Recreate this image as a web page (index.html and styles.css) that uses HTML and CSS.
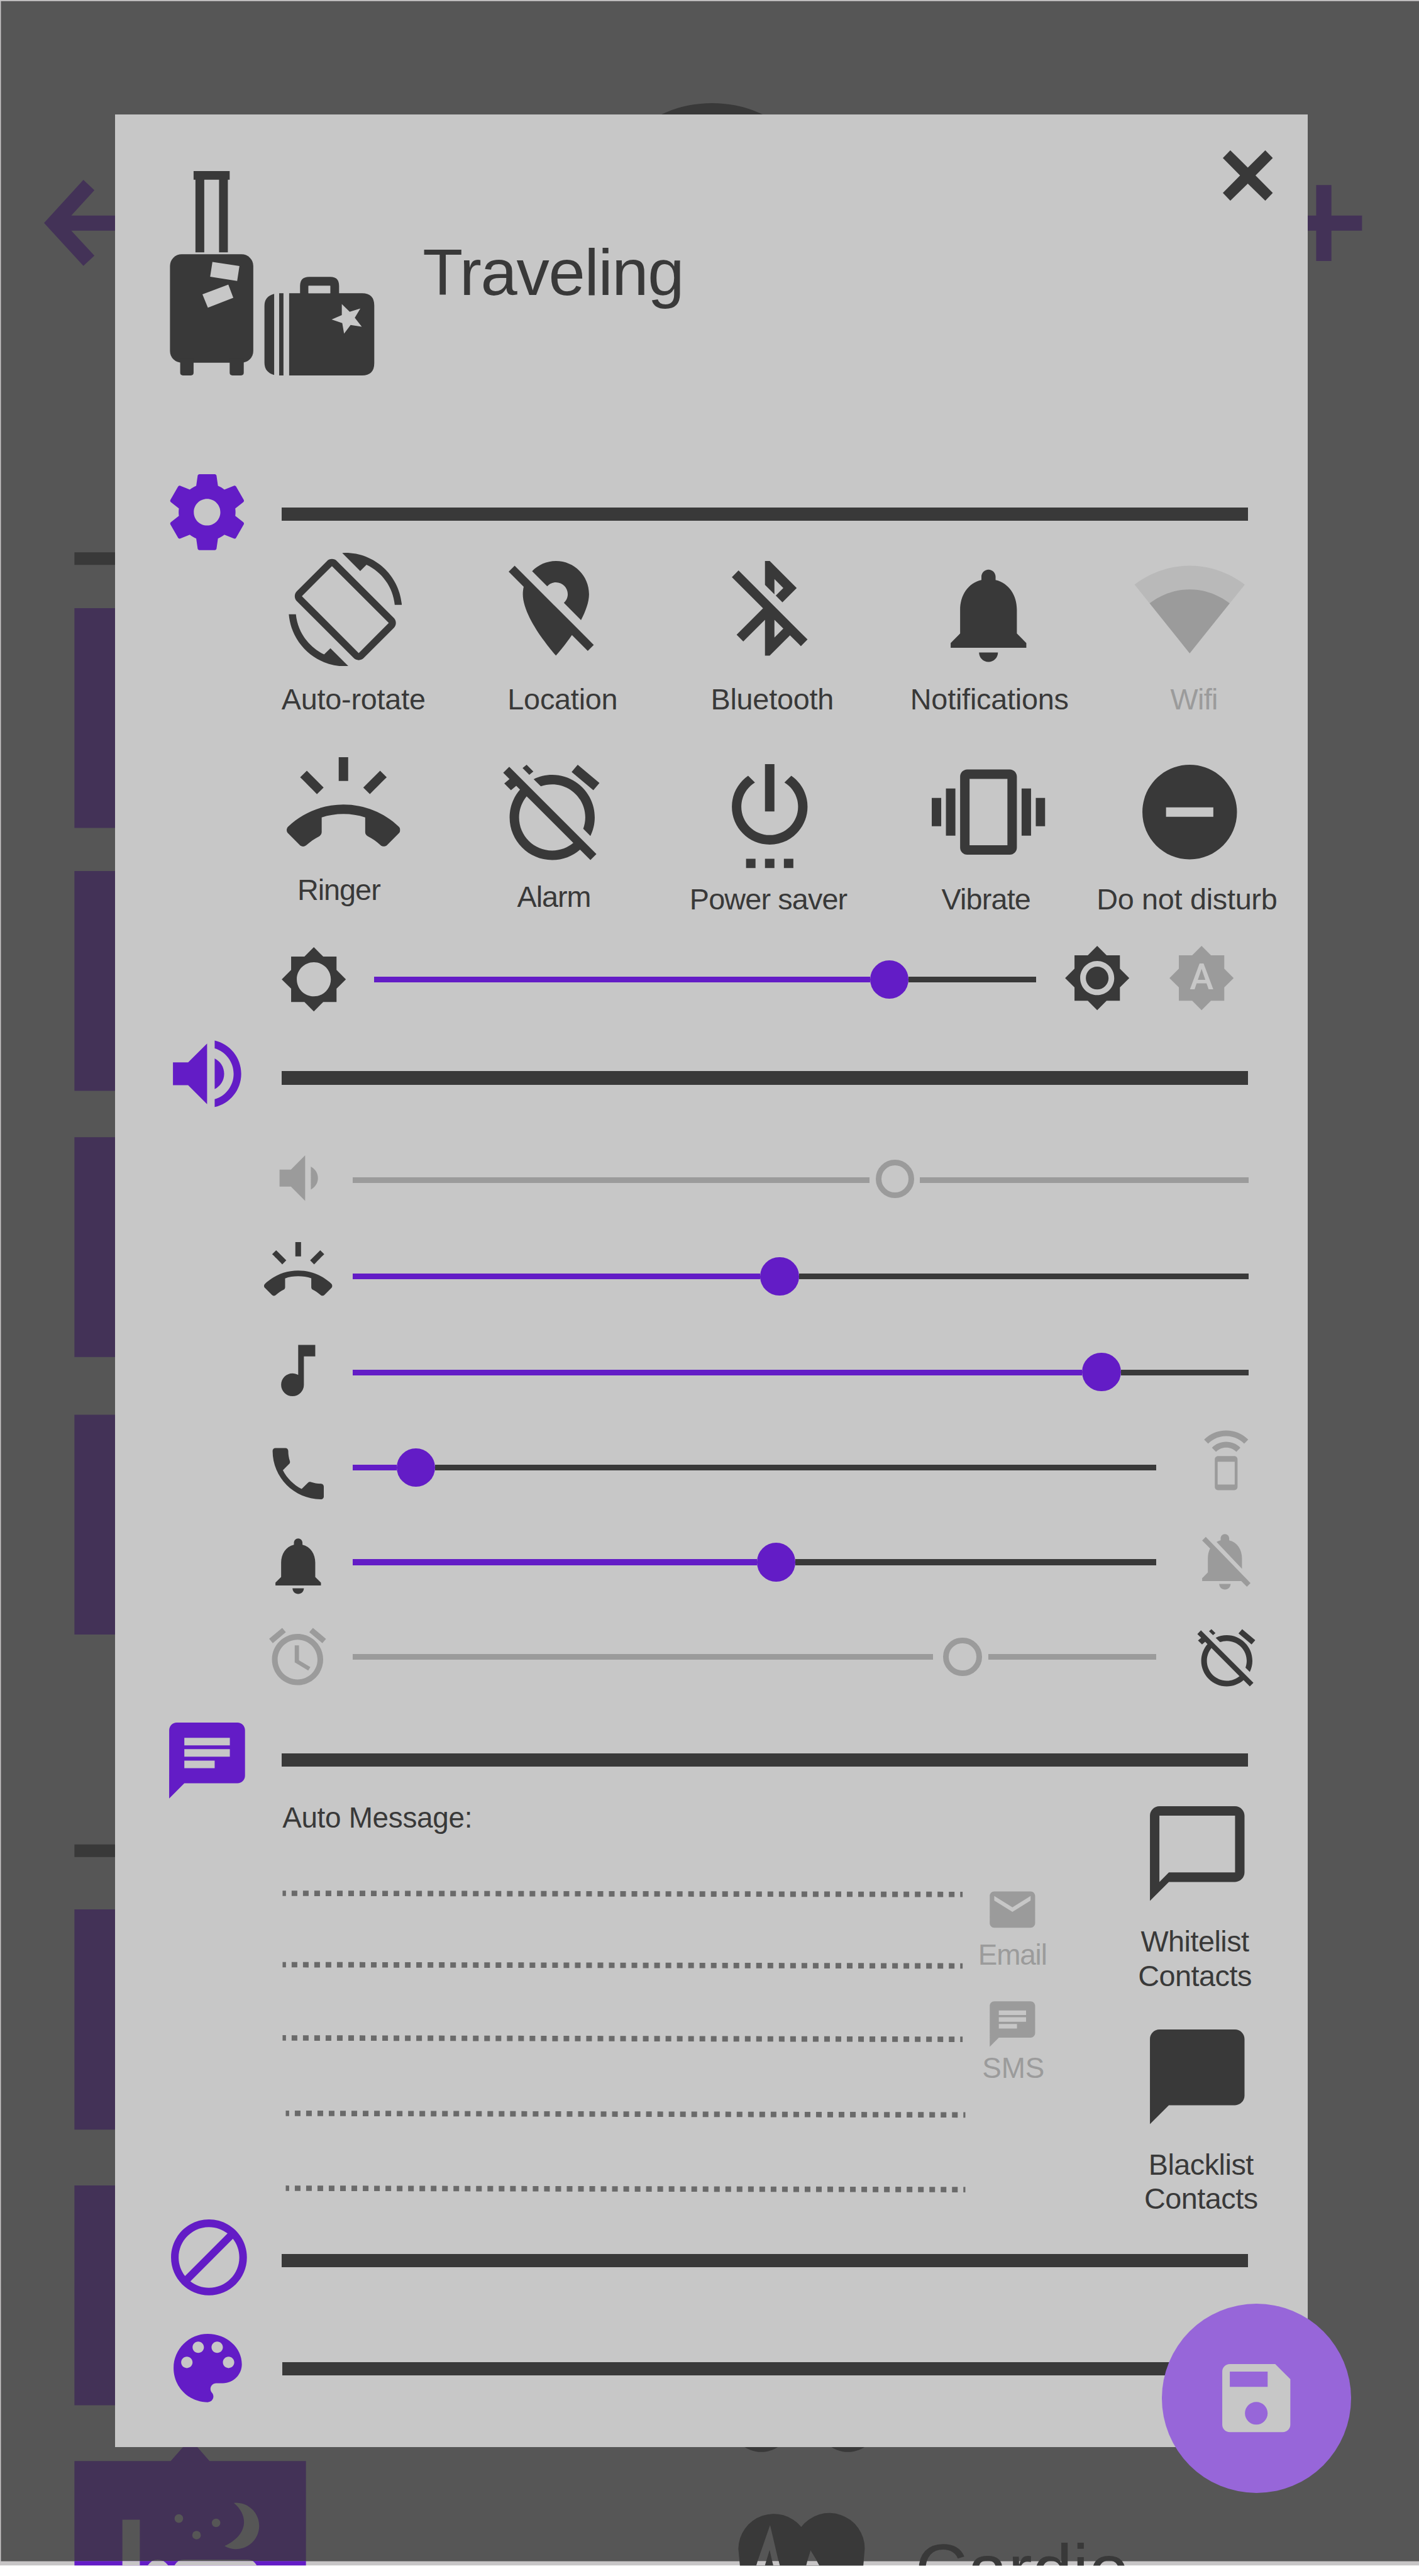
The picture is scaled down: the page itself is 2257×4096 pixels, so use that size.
FILE: index.html
```html
<!DOCTYPE html>
<html lang="en">
<head>
<meta charset="utf-8">
<title>Traveling</title>
<link rel="stylesheet" href="styles.css">
</head>
<body>
<svg class="sprite" aria-hidden="true">
  <symbol id="settings" viewBox="0 0 24 24"><path d="M19.43 12.98c.04-.32.07-.64.07-.98s-.03-.66-.07-.98l2.11-1.65c.19-.15.24-.42.12-.64l-2-3.46c-.12-.22-.39-.3-.61-.22l-2.49 1c-.52-.4-1.08-.73-1.69-.98l-.38-2.65C14.46 2.18 14.25 2 14 2h-4c-.25 0-.46.18-.49.42l-.38 2.65c-.61.25-1.17.59-1.69.98l-2.49-1c-.23-.09-.49 0-.61.22l-2 3.46c-.13.22-.07.49.12.64l2.11 1.65c-.04.32-.07.65-.07.98s.03.66.07.98l-2.11 1.65c-.19.15-.24.42-.12.64l2 3.46c.12.22.39.3.61.22l2.49-1c.52.4 1.08.73 1.69.98l.38 2.65c.03.24.24.42.49.42h4c.25 0 .46-.18.49-.42l.38-2.65c.61-.25 1.17-.59 1.69-.98l2.49 1c.23.09.49 0 .61-.22l2-3.46c.12-.22.07-.49-.12-.64l-2.11-1.65zM12 15.5c-1.93 0-3.5-1.57-3.5-3.5s1.57-3.5 3.5-3.5 3.5 1.57 3.5 3.5-1.57 3.5-3.5 3.5z"/></symbol>
  <symbol id="rotate" viewBox="0 0 24 24"><path d="M16.48 2.52c3.27 1.55 5.61 4.72 5.97 8.48h1.5C23.44 4.84 18.29 0 12 0l-.66.03 3.81 3.81 1.33-1.32zm-6.25-.77c-.59-.59-1.54-.59-2.12 0L1.75 8.11c-.59.59-.59 1.54 0 2.12l12.02 12.02c.59.59 1.54.59 2.12 0l6.36-6.36c.59-.59.59-1.54 0-2.12L10.23 1.75zm4.6 19.44L2.81 9.17l6.36-6.36 12.02 12.02-6.36 6.36zm-7.31.29C4.25 19.94 1.91 16.76 1.55 13H.05C.56 19.16 5.71 24 12 24l.66-.03-3.81-3.81-1.33 1.32z"/></symbol>
  <symbol id="location-off" viewBox="0 0 24 24"><path d="M12 6.5c1.38 0 2.5 1.12 2.5 2.5 0 .74-.33 1.39-.83 1.85l3.63 3.63c.98-1.86 1.7-3.8 1.7-5.48 0-3.87-3.13-7-7-7-1.98 0-3.76.83-5.04 2.15l3.19 3.19c.46-.52 1.11-.84 1.85-.84zm4.37 9.6l-4.63-4.63-.11-.11L3.27 3 2 4.27l3.18 3.18C5.07 7.95 5 8.47 5 9c0 5.25 7 13 7 13s1.67-1.85 3.38-4.35L18.73 21 20 19.73l-3.63-3.63z"/></symbol>
  <symbol id="bluetooth-off" viewBox="0 0 24 24"><path d="M13 5.83l1.88 1.88-1.6 1.6 1.41 1.41 3.02-3.02L12 2h-1v5.03l2 2v-3.2zM5.41 4L4 5.41 10.59 12 5 17.59 6.41 19 11 14.41V22h1l4.29-4.29 2.3 2.29L20 18.59 5.41 4zM13 18.17v-3.76l1.88 1.88L13 18.17z"/></symbol>
  <symbol id="bell" viewBox="0 0 24 24"><path d="M12 22c1.1 0 2-.9 2-2h-4c0 1.1.89 2 2 2zm6-6v-5c0-3.07-1.64-5.64-4.5-6.32V4c0-.83-.67-1.5-1.5-1.5s-1.5.67-1.5 1.5v.68C7.63 5.36 6 7.92 6 11v5l-2 2v1h16v-1l-2-2z"/></symbol>
  <symbol id="bell-off" viewBox="0 0 24 24"><path d="M20 18.69L7.84 6.14 5.27 3.49 4 4.76l2.8 2.8v.01c-.52.99-.8 2.16-.8 3.42v5l-2 2v1h13.73l2 2L21 19.72l-1-1.03zM12 22c1.11 0 2-.89 2-2h-4c0 1.11.89 2 2 2zm6-7.32V11c0-3.08-1.64-5.64-4.5-6.32V4c0-.83-.67-1.5-1.5-1.5s-1.5.67-1.5 1.5v.68c-.15.03-.29.08-.42.12-.1.03-.2.07-.3.11h-.01c-.01 0-.01 0-.02.01-.23.09-.46.2-.68.31 0 0-.01 0-.01.01L18 14.68z"/></symbol>
  <symbol id="wifi" viewBox="0 0 24 24"><path class="wifi-outer" d="M12.01 21.49L23.64 7c-.45-.34-4.93-4-11.64-4C5.28 3 .81 6.66.36 7l11.63 14.49.01.01.01-.01z"/><path d="M3.53 10.95l8.46 10.54.01.01.01-.01 8.46-10.54C20.04 10.62 16.81 8 12 8c-4.81 0-8.04 2.62-8.47 2.95z"/></symbol>
  <symbol id="ringer" viewBox="0 0 24 24"><path d="M23.71 16.67C20.66 13.78 16.54 12 12 12 7.46 12 3.34 13.78.29 16.67c-.18.18-.29.43-.29.71 0 .28.11.53.29.71l2.48 2.48c.18.18.43.29.71.29.27 0 .52-.11.7-.28.79-.74 1.69-1.36 2.66-1.85.33-.16.56-.5.56-.9v-3.1c1.45-.48 3-.73 4.6-.73s3.15.25 4.6.72v3.1c0 .39.23.74.56.9.98.49 1.87 1.12 2.66 1.85.18.18.43.28.7.28.28 0 .53-.11.71-.29l2.48-2.48c.18-.18.29-.43.29-.71 0-.28-.12-.52-.3-.7zM21.16 6.26l-1.41-1.41-3.56 3.55 1.41 1.41s3.45-3.52 3.56-3.55zM13 2h-2v5h2V2zM6.4 9.81L7.81 8.4 4.26 4.84 2.84 6.26c.11.03 3.56 3.55 3.56 3.55z"/></symbol>
  <symbol id="alarm" viewBox="0 0 24 24"><path d="M22 5.72l-4.6-3.86-1.29 1.53 4.6 3.86L22 5.72zM7.88 3.39L6.6 1.86 2 5.71l1.29 1.53 4.59-3.85zM12.5 8H11v6l4.75 2.85.75-1.23-4-2.37V8zM12 4c-4.97 0-9 4.03-9 9s4.02 9 9 9c4.97 0 9-4.03 9-9s-4.03-9-9-9zm0 16c-3.87 0-7-3.13-7-7s3.13-7 7-7 7 3.13 7 7-3.13 7-7 7z"/></symbol>
  <symbol id="alarm-off" viewBox="0 0 24 24"><path d="M12 6c3.87 0 7 3.13 7 7 0 .84-.16 1.65-.43 2.4l1.52 1.52c.58-1.19.91-2.51.91-3.92 0-4.97-4.03-9-9-9-1.41 0-2.73.33-3.92.91L9.6 6.43C10.35 6.16 11.16 6 12 6zm10-.28l-4.6-3.86-1.29 1.53 4.6 3.86L22 5.72zM2.92 2.29L1.65 3.57 2.98 4.9l-1.11.93 1.42 1.42 1.11-.94.8.8C3.83 8.69 3 10.75 3 13c0 4.97 4.02 9 9 9 2.25 0 4.31-.83 5.89-2.2l2.2 2.2 1.27-1.27L3.89 3.27l-.97-.98zm13.55 16.1C15.26 19.39 13.7 20 12 20c-3.87 0-7-3.13-7-7 0-1.7.61-3.26 1.61-4.47l9.86 9.86zM8.02 3.28L6.6 1.86l-.86.71 1.42 1.42.86-.71z"/></symbol>
  <symbol id="power" viewBox="0 0 24 24"><path d="M7 24h2v-2H7v2zm4 0h2v-2h-2v2zm2-22h-2v10h2V2zm3.56 2.44l-1.45 1.45C16.84 6.94 18 8.83 18 11c0 3.31-2.69 6-6 6s-6-2.69-6-6c0-2.17 1.16-4.06 2.88-5.12L7.44 4.44C5.36 5.88 4 8.28 4 11c0 4.42 3.58 8 8 8s8-3.58 8-8c0-2.72-1.36-5.12-3.44-6.56zM15 24h2v-2h-2v2z"/></symbol>
  <symbol id="vibrate" viewBox="0 0 24 24"><path d="M0 15h2V9H0v6zm3 2h2V7H3v10zm19-8v6h2V9h-2zm-3 8h2V7h-2v10zM16.5 3h-9C6.67 3 6 3.67 6 4.5v15c0 .83.67 1.5 1.5 1.5h9c.83 0 1.5-.67 1.5-1.5v-15c0-.83-.67-1.5-1.5-1.5zM16 19H8V5h8v14z"/></symbol>
  <symbol id="dnd" viewBox="0 0 24 24"><path d="M12 2C6.48 2 2 6.48 2 12s4.48 10 10 10 10-4.48 10-10S17.52 2 12 2zm5 11H7v-2h10v2z"/></symbol>
  <symbol id="brightness-low" viewBox="0 0 24 24"><path d="M20 15.31L23.31 12 20 8.69V4h-4.69L12 .69 8.69 4H4v4.69L.69 12 4 15.31V20h4.69L12 23.31 15.31 20H20v-4.69zM12 18c-3.31 0-6-2.69-6-6s2.69-6 6-6 6 2.69 6 6-2.69 6-6 6z"/></symbol>
  <symbol id="brightness-high" viewBox="0 0 24 24"><path d="M20 8.69V4h-4.69L12 .69 8.69 4H4v4.69L.69 12 4 15.31V20h4.69L12 23.31 15.31 20H20v-4.69L23.31 12 20 8.69zM12 18c-3.31 0-6-2.69-6-6s2.69-6 6-6 6 2.69 6 6-2.69 6-6 6zm0-10c-2.21 0-4 1.79-4 4s1.79 4 4 4 4-1.79 4-4-1.79-4-4-4z"/></symbol>
  <symbol id="volume-up" viewBox="0 0 24 24"><path d="M3 9v6h4l5 5V4L7 9H3zm13.500 3c0-1.770-1.020-3.290-2.500-4.030v8.050c1.480-.73 2.500-2.250 2.500-4.020zM14 3.230v2.060c2.890.86 5 3.540 5 6.710s-2.110 5.850-5 6.710v2.060c4.010-.91 7-4.490 7-8.770s-2.990-7.860-7-8.770z"/></symbol>
  <symbol id="volume-down" viewBox="0 0 24 24"><path d="M18.500 12c0-1.770-1.020-3.290-2.500-4.030v8.050c1.480-.73 2.500-2.250 2.500-4.020zM5 9v6h4l5 5V4L9 9H5z"/></symbol>
  <symbol id="music" viewBox="0 0 24 24"><path d="M12 3v10.550c-.59-.34-1.270-.55-2-.55-2.210 0-4 1.790-4 4s1.790 4 4 4 4-1.790 4-4V7h4V3h-6z"/></symbol>
  <symbol id="phone" viewBox="0 0 24 24"><path d="M20 15.500c-1.250 0-2.450-.2-3.570-.57-.35-.11-.74-.03-1.020.24l-2.200 2.200c-2.830-1.440-5.150-3.750-6.590-6.580l2.200-2.210c.28-.27.36-.66.25-1.010C8.700 6.450 8.500 5.250 8.500 4c0-.55-.45-1-1-1H4c-.55 0-1 .45-1 1 0 9.390 7.610 17 17 17 .55 0 1-.45 1-1v-3.500c0-.55-.45-1-1-1z"/></symbol>
  <symbol id="speaker-phone" viewBox="0 0 24 24"><path d="M7 7.07L8.430 8.500c.91-.91 2.180-1.480 3.570-1.480s2.660.57 3.570 1.480L17 7.070C15.720 5.790 13.950 5 12 5s-3.720.79-5 2.070zM12 1C8.980 1 6.240 2.230 4.250 4.210l1.410 1.410C7.280 4 9.530 3 12 3s4.720 1 6.340 2.620l1.410-1.410C17.760 2.230 15.020 1 12 1zm2.860 9.010L9.140 10C8.510 10 8 10.510 8 11.140v9.710c0 .63.51 1.140 1.140 1.140h5.710c.63 0 1.140-.51 1.140-1.140v-9.710c.01-.63-.5-1.130-1.130-1.130zM15 20H9v-8h6v8z"/></symbol>
  <symbol id="chat" viewBox="0 0 24 24"><path d="M20 2H4c-1.100 0-1.990.9-1.990 2L2 22l4-4h14c1.100 0 2-.9 2-2V4c0-1.100-.9-2-2-2zM6 9h12v2H6V9zm8 5H6v-2h8v2zm4-6H6V6h12v2z"/></symbol>
  <symbol id="mail" viewBox="0 0 24 24"><path d="M20 4H4c-1.100 0-1.990.9-1.990 2L2 18c0 1.100.9 2 2 2h16c1.100 0 2-.9 2-2V6c0-1.100-.9-2-2-2zm0 4l-8 5-8-5V6l8 5 8-5v2z"/></symbol>
  <symbol id="bubble-outline" viewBox="0 0 24 24"><path d="M20 2H4c-1.100 0-2 .9-2 2v18l4-4h14c1.100 0 2-.9 2-2V4c0-1.100-.9-2-2-2zm0 14H6l-2 2V4h16v12z"/></symbol>
  <symbol id="bubble" viewBox="0 0 24 24"><path d="M20 2H4c-1.100 0-2 .9-2 2v18l4-4h14c1.100 0 2-.9 2-2V4c0-1.100-.9-2-2-2z"/></symbol>
  <symbol id="block" viewBox="0 0 24 24"><path d="M12 2C6.480 2 2 6.480 2 12s4.480 10 10 10 10-4.480 10-10S17.520 2 12 2zM4 12c0-4.420 3.580-8 8-8 1.850 0 3.550.63 4.900 1.690L5.690 16.900C4.630 15.550 4 13.850 4 12zm8 8c-1.850 0-3.550-.63-4.900-1.690L18.310 7.100C19.370 8.450 20 10.150 20 12c0 4.420-3.580 8-8 8z"/></symbol>
  <symbol id="palette" viewBox="0 0 24 24"><path d="M12 3c-4.970 0-9 4.030-9 9s4.030 9 9 9c.83 0 1.500-.67 1.500-1.500 0-.39-.15-.74-.39-1.010-.23-.26-.38-.61-.38-.99 0-.83.67-1.500 1.500-1.500H16c2.760 0 5-2.240 5-5 0-4.420-4.030-8-9-8zm-5.500 9c-.83 0-1.500-.67-1.500-1.500S5.670 9 6.500 9 8 9.670 8 10.500 7.330 12 6.500 12zm3-4C8.670 8 8 7.330 8 6.500S8.670 5 9.500 5s1.500.67 1.500 1.500S10.330 8 9.500 8zm5 0c-.83 0-1.500-.67-1.500-1.500S13.670 5 14.500 5s1.500.67 1.500 1.500S15.330 8 14.500 8zm3 4c-.83 0-1.500-.67-1.500-1.500S16.670 9 17.500 9s1.500.67 1.500 1.500-.67 1.500-1.500 1.500z"/></symbol>
  <symbol id="save" viewBox="0 0 24 24"><path d="M17 3H5c-1.110 0-2 .9-2 2v14c0 1.100.89 2 2 2h14c1.100 0 2-.9 2-2V7l-4-4zm-5 16c-1.660 0-3-1.340-3-3s1.340-3 3-3 3 1.340 3 3-1.340 3-3 3zm3-10H5V5h10v4z"/></symbol>
</svg>

<div class="screen">
  <!-- Dimmed profile list behind the dialog -->
  <svg class="backdrop" viewBox="0 0 3126 5672" preserveAspectRatio="none" aria-hidden="true">
    <defs><clipPath id="page"><rect width="3126" height="5649"/></clipPath></defs>
    <g clip-path="url(#page)">
      <rect class="edge" width="3126" height="5649"/>
      <rect class="dim" x="2" y="2.500" width="3124" height="5637"/>
      <g class="muted">
        <path d="M97 491 183.700 396 208 419 157 474.700H300V508H157L208 563 183.700 585.500z"/>
        <path d="M2860 474.700h39.500v-67.200H2933v67.200h67.500V508H2933v66.600h-33.500V508H2860z"/>
        <path d="M164 1339h120v484H164zM164 1918h120v484H164zM164 2504h120v484H164zM164 3115h120v484H164zM164 4204h120v485H164zM164 4812h120v484H164z"/>
        <path d="M164 5419H376L419 5370 461.600 5419H674V5639H164z"/>
      </g>
      <path class="accent" d="M164 5639H674V5649H164z"/>
      <g class="dim">
        <path d="M269.600 5548H308v91h-38.400z"/>
        <circle cx="394" cy="5545.500" r="9.500"/><circle cx="476" cy="5555" r="9.500"/><circle cx="433" cy="5582" r="9.500"/>
        <path d="M515 5511A51 51 0 1 1 494.600 5606C545 5583 550 5540 515 5511z"/>
        <path d="M335 5639q12-6 24 0zM393 5639q5-3 12-3h140q7 0 12 3z"/>
      </g>
      <path class="edge" d="M269.600 5639H308v10h-38.400zM325 5649q4-6 10-10h25q7 4 11 10zM384 5649q3-6 9-10h164q6 4 9 10z"/>
      <g class="ink">
        <path d="M164 1216h120v28H164zM164 4061h120v28H164z"/>
        <circle cx="1568.600" cy="490" r="263"/>
        <circle cx="1677" cy="5333" r="66"/><circle cx="1868" cy="5333" r="66"/>
        <path d="M1626.500 5612A78 78 0 0 1 1765 5564 78 78 0 0 1 1905 5612L1901 5660H1631z"/>
        <text class="behind-title" x="2016" y="5714">Cardio</text>
      </g>
      <path class="dim" d="M1669 5639 1696.500 5560 1715 5639H1701L1695.500 5614.700 1688 5639zM1778.500 5639 1785.700 5615.700 1800 5639z"/>
      <path class="edge" d="M1666 5649 1669 5639H1688L1685 5649zM1703.600 5649 1701 5639H1715.500L1718 5649zM1776 5649 1778.500 5639H1799.500L1805 5649z"/>
    </g>
  </svg>

  <main class="dialog">
    <header class="dialog-head">
      <svg class="luggage" viewBox="374 377 451 450" aria-hidden="true">
        <path d="M426.500 377H506v19h-4v160h-19.400V396H450v160h-19.400V396h-4.100z"/>
        <rect x="374.500" y="560" width="183.500" height="239" rx="26"/>
        <path d="M397 790h29.500v31q0 6-6 6H403q-6 0-6-6zM506 790h31v31q0 6-6 6h-19q-6 0-6-6z"/>
        <path class="cut" d="M468 577 527.500 586 522.500 619 463 609.600zM503 627 514 656 458 678 446 648.600z"/>
        <path d="M604 647.500V826Q582.600 820 582.600 799V674Q582.600 653 604 647.500zM615 646h9.500v181H615zM637 646h24v-16q0-20 20-20h47q19 0 19 20v16h50.500q27 0 27 27v127q0 27-27 27H637zM679.600 629.600V646h47.900v-16.400z"/>
        <path class="cut" d="M679.600 629.600h47.900V646h-47.900z"/>
        <path class="cut" d="M753 669.800 770.400 687 793.900 679.600 781.600 700 797 719.800 772.400 716 758 735 754 711.700 730.600 704 753 694z"/>
      </svg>
      <h1 class="title">Traveling</h1>
      <svg class="close" viewBox="0 0 110 111" aria-label="Close"><path d="M0 17 16.500 0 55 38 93.500 0 110 17 72 55.500 110 94 93.500 111 55 73.500 16.500 111 0 94 38 55.500z"/></svg>
    </header>

    <section class="section settings">
      <div class="section-head"><svg class="section-icon"><use href="#settings"/></svg><hr class="bar"></div>
      <div class="tiles first">
        <div class="tile rotate"><svg class="icon"><use href="#rotate"/></svg><span class="label">Auto-rotate</span></div>
        <div class="tile location"><svg class="icon"><use href="#location-off"/></svg><span class="label">Location</span></div>
        <div class="tile bluetooth"><svg class="icon"><use href="#bluetooth-off"/></svg><span class="label">Bluetooth</span></div>
        <div class="tile notifications"><svg class="icon"><use href="#bell"/></svg><span class="label">Notifications</span></div>
        <div class="tile wifi off"><svg class="icon"><use href="#wifi"/></svg><span class="label">Wifi</span></div>
      </div>
      <div class="tiles second">
        <div class="tile ringer"><svg class="icon"><use href="#ringer"/></svg><span class="label">Ringer</span></div>
        <div class="tile alarm"><svg class="icon"><use href="#alarm-off"/></svg><span class="label">Alarm</span></div>
        <div class="tile power"><svg class="icon"><use href="#power"/></svg><span class="label">Power saver</span></div>
        <div class="tile vibrate"><svg class="icon"><use href="#vibrate"/></svg><span class="label">Vibrate</span></div>
        <div class="tile dnd"><svg class="icon"><use href="#dnd"/></svg><span class="label">Do not disturb</span></div>
      </div>
      <div class="brightness">
        <svg class="icon low"><use href="#brightness-low"/></svg>
        <div class="slider"><span class="fill" style="width:74.95%"></span><span class="knob"></span><span class="rest"></span></div>
        <svg class="icon"><use href="#brightness-high"/></svg>
        <svg class="icon off" viewBox="0 0 24 24"><path d="M20 8.690V4h-4.690L12 .69 8.690 4H4v4.690L.69 12 4 15.310V20h4.690L12 23.310 15.310 20H20v-4.690L23.310 12 20 8.690z"/><text class="auto-letter" x="12" y="16" text-anchor="middle">A</text></svg>
      </div>
    </section>

    <section class="section volume">
      <div class="section-head"><svg class="section-icon"><use href="#volume-up"/></svg><hr class="bar"></div>
      <div class="row main off">
        <svg class="icon"><use href="#volume-down"/></svg>
        <div class="slider"><span class="fill" style="width:57.71%"></span><span class="knob"></span><span class="rest"></span></div>
      </div>
      <div class="row ring">
        <svg class="icon"><use href="#ringer"/></svg>
        <div class="slider"><span class="fill" style="width:45.5%"></span><span class="knob"></span><span class="rest"></span></div>
      </div>
      <div class="row media">
        <svg class="icon"><use href="#music"/></svg>
        <div class="slider"><span class="fill" style="width:81.45%"></span><span class="knob"></span><span class="rest"></span></div>
      </div>
      <div class="row call short">
        <svg class="icon"><use href="#phone"/></svg>
        <div class="slider"><span class="fill" style="width:5.43%"></span><span class="knob"></span><span class="rest"></span></div>
        <svg class="icon trailing off"><use href="#speaker-phone"/></svg>
      </div>
      <div class="row notice short">
        <svg class="icon"><use href="#bell"/></svg>
        <div class="slider"><span class="fill" style="width:50.28%"></span><span class="knob"></span><span class="rest"></span></div>
        <svg class="icon trailing off"><use href="#bell-off"/></svg>
      </div>
      <div class="row clock short off">
        <svg class="icon"><use href="#alarm"/></svg>
        <div class="slider"><span class="fill" style="width:72.19%"></span><span class="knob"></span><span class="rest"></span></div>
        <svg class="icon trailing on"><use href="#alarm-off"/></svg>
      </div>
    </section>

    <section class="section message">
      <div class="section-head"><svg class="section-icon"><use href="#chat"/></svg><hr class="bar"></div>
      <div class="message-body">
        <div class="note">
          <span class="label">Auto Message:</span>
          <svg class="rules" viewBox="620 4100 1520 760" aria-hidden="true">
            <path d="M622 4168.500 2120 4171M622 4325.700 2120 4328.500M622 4487 2120 4490M629 4653 2126 4656.500M629 4818 2126 4821"/>
          </svg>
        </div>
        <div class="channels off">
          <svg class="icon"><use href="#mail"/></svg><span class="label email">Email</span>
          <svg class="icon sms-icon"><use href="#chat"/></svg><span class="label sms">SMS</span>
        </div>
        <div class="contacts">
          <svg class="icon"><use href="#bubble-outline"/></svg><span class="label white">Whitelist<br>Contacts</span>
          <svg class="icon black-icon"><use href="#bubble"/></svg><span class="label black">Blacklist<br>Contacts</span>
        </div>
      </div>
    </section>

    <section class="section blocked"><div class="section-head"><svg class="section-icon"><use href="#block"/></svg><hr class="bar"></div></section>
    <section class="section theme"><div class="section-head"><svg class="section-icon"><use href="#palette"/></svg><hr class="bar"></div></section>
  </main>

  <div class="fab"><svg class="fab-icon"><use href="#save"/></svg></div>
</div>
</body>
</html>
```
FILE: styles.css
```css
:root {
  --ink: #393939;
  --accent: #631cc6;
  --accent-light: #9766d9;
  --accent-dim: #433257;
  --paper: #c7c7c7;
  --off: #9b9b9b;
  --dim: #565656;
}

/* 1rem is one hundredth-grid step of the 3126 x 5672 artboard */
html { font-size: 72.21px; }
* { box-sizing: border-box; }

body {
  margin: 0;
  background: #fff;
  color: var(--ink);
  font-family: "Liberation Sans", Arial, sans-serif;
  overflow: hidden;
}

svg { display: block; fill: currentColor; flex: none; }
.sprite { position: absolute; width: 0; height: 0; }
.screen { position: relative; width: 2257px; height: 4096px; overflow: hidden; }

/* backdrop */
.backdrop { width: 2257px; height: 4096px; }
.backdrop .edge { fill: #c7c5c6; }
.backdrop .dim { fill: var(--dim); }
.backdrop .muted { fill: var(--accent-dim); }
.backdrop .accent { fill: var(--accent); }
.backdrop .ink { fill: var(--ink); }
.behind-title { font-size: 160px; }

/* dialog */
.dialog {
  position: absolute;
  left: 2.54rem;
  top: 2.52rem;
  width: 26.26rem;
  height: 51.37rem;
  background: var(--paper);
}

.dialog-head { display: flex; align-items: flex-start; height: 7.76rem; padding-left: 1.2rem; }
.luggage { width: 4.51rem; height: 4.5rem; margin-top: 1.25rem; }
.luggage .cut { fill: var(--paper); }
.title { margin: 2.675rem 0 0 1.06rem; font-size: 1.45rem; font-weight: 400; line-height: 1.6rem; letter-spacing: -.018rem; white-space: nowrap; }
.close { width: 1.1rem; height: 1.11rem; margin: .79rem .76rem 0 auto; }

.section-head { display: flex; align-items: flex-start; padding-left: 1.02rem; }
.section-icon { width: 2.005rem; height: 2.005rem; color: var(--accent); }
.bar { width: 21.29rem; height: .295rem; margin: .89rem 0 0 .635rem; border: 0; background: var(--ink); }

/* quick toggles */
.settings { height: 12.365rem; }
.settings .section-head { height: 1.86rem; }
.tiles { display: grid; grid-template-columns: 4.45rem 4.45rem 4.9rem 4.1rem 4.5rem; padding-left: 3.66rem; }
.tiles.first { height: 4.33rem; }
.tiles.second { height: 4.315rem; }
.tile { display: grid; grid-template-rows: 2.874rem .8rem; justify-items: start; }
.second .tile { grid-template-rows: 2.944rem .8rem; }
.tile .icon { width: 2.5rem; height: 2.5rem; }
.label { font-size: .648rem; line-height: .8rem; letter-spacing: -.003rem; white-space: nowrap; }
.off { color: var(--off); }
.on { color: var(--ink); }
.wifi-outer { fill: #b9b9b9; }

.rotate .icon { margin: .03rem 0 0 .155rem; }
.location .icon { margin-left: .34rem; }
.location .label { margin-left: .53rem; }
.bluetooth .icon { margin-left: .61rem; }
.bluetooth .label { margin-left: .555rem; }
.notifications .icon { margin: .15rem 0 0 .53rem; }
.notifications .label { margin-left: .05rem; }
.wifi .icon { margin-left: .86rem; }
.wifi .label { margin-left: 1.68rem; letter-spacing: -.01rem; }
.ringer .icon { margin-left: .12rem; }
.ringer .label { margin: -.21rem 0 0 .35rem; letter-spacing: -.014rem; }
.tile.alarm .icon { margin: .17rem 0 0 .26rem; }
.tile.alarm .label { margin: -.05rem 0 0 .74rem; letter-spacing: -.014rem; }
.power .icon { margin: .155rem 0 0 .61rem; }
.power .label { margin-left: .09rem; letter-spacing: -.012rem; }
.vibrate .icon { margin: .16rem 0 0 .53rem; }
.vibrate .label { margin-left: .74rem; letter-spacing: -.012rem; }
.dnd .icon { margin: .156rem 0 0 .86rem; }
.dnd .label { margin-left: .055rem; letter-spacing: -.004rem; }

.brightness { display: flex; align-items: flex-start; padding-left: 3.62rem; }
.brightness .icon { width: 1.5rem; height: 1.5rem; }
.brightness .low { margin-top: .03rem; }
.brightness .slider { width: 14.583rem; margin: .36rem .6rem 0 .575rem; }
.brightness .off { margin-left: .806rem; }
.auto-letter { fill: var(--paper); font: 500 12.660px Roboto, sans-serif; }

/* sliders */
.slider { display: flex; align-items: center; height: .85rem; color: var(--accent); }
.fill, .rest { height: .13rem; }
.fill { flex: none; background: currentColor; }
.rest { flex: 1; background: var(--ink); }
.knob { flex: none; width: .85rem; height: .85rem; border-radius: 50%; background: currentColor; }
.row.off .slider { color: var(--off); }
.row.off .rest { background: currentColor; }
.row.off .knob { background: none; border: .127rem solid currentColor; }

.volume { height: 15.122rem; }
.volume .section-head { height: 2.545rem; }
.volume .bar { margin-top: .945rem; }
.row { display: flex; align-items: flex-start; padding-left: 3.28rem; }
.row .icon { width: 1.504rem; height: 1.504rem; }
.row .slider { width: 19.724rem; margin-left: .45rem; }
.row.short .slider { width: 17.694rem; }
.row .trailing { margin-left: .77rem; }

.row.main { height: 2.04rem; }
.row.main .icon { margin-left: .02rem; }
.row.main .slider { margin: .375rem 0 0 .43rem; }
.row.main .knob { margin: -.06rem .125rem 0 .131rem; }
.row.ring { height: 2.2rem; }
.row.ring .slider { margin-top: .45rem; }
.row.media { height: 2.007rem; }
.row.media .slider { margin-top: .371rem; }
.row.media .knob { margin-top: -.025rem; }
.row.call { height: 2.187rem; }
.row.call .icon { margin-top: .263rem; }
.row.call .slider { margin-top: .452rem; }
.row.call .trailing { margin: 0 0 0 .785rem; }
.row.notice { height: 2.111rem; }
.row.notice .icon { margin-top: .091rem; }
.row.notice .slider { margin-top: .35rem; }
.row.notice .trailing { margin: 0 0 0 .76rem; }
.row.clock .icon { margin-left: -.015rem; }
.row.clock .slider { margin: .322rem 0 0 .465rem; }
.row.clock .knob { margin: 0 .146rem 0 .23rem; }
.row.clock .trailing { margin: .018rem 0 0 .797rem; }

/* auto message */
.message { height: 10.939rem; }
.message .section-head { height: 1.797rem; }
.message .bar { margin-top: .84rem; }
.message-body { display: grid; grid-template-columns: 15.1rem 2rem 3.1rem; padding-left: 3.66rem; }
.note .label { display: block; margin: .064rem 0 0 .02rem; font-size: .635rem; letter-spacing: -.004rem; }
.rules { width: 15.2rem; height: 7.6rem; margin-top: .572rem; fill: none; stroke: #6a6a6a; stroke-width: 12; stroke-dasharray: 12.48 12.48; stroke-dashoffset: 5; }
.channels, .contacts { display: flex; flex-direction: column; align-items: center; }
.channels .icon { width: 1.2rem; height: 1.2rem; margin-top: 1.88rem; }
.channels .sms-icon { margin-top: .572rem; }
.channels .label { font-size: .635rem; line-height: .7rem; }
.channels .email { margin-top: .054rem; letter-spacing: -.016rem; }
.sms { margin: .02rem 0 0 .04rem; }
.contacts { margin-left: 1.52rem; width: 3.1rem; }
.contacts .icon { width: 2.5rem; height: 2.5rem; }
.contacts .black-icon { margin-top: .597rem; }
.contacts .label { line-height: .76rem; letter-spacing: -.007rem; text-align: center; }
.white { margin: .308rem .1rem 0 0; }
.black { margin: .298rem 0 0 .17rem; }

.blocked { height: 2.439rem; }
.blocked .section-icon { margin-left: .04rem; }
.blocked .bar { margin: .925rem 0 0 .595rem; }
.theme .section-icon { margin-left: .02rem; }
.theme .bar { width: 21.28rem; margin: .865rem 0 0 .63rem; }

.fab {
  position: absolute;
  left: 25.588rem;
  top: 50.726rem;
  display: grid;
  place-items: center;
  width: 4.175rem;
  height: 4.175rem;
  border-radius: 50%;
  background: var(--accent-light);
  color: var(--paper);
}
.fab-icon { width: 2rem; height: 2rem; }
```
